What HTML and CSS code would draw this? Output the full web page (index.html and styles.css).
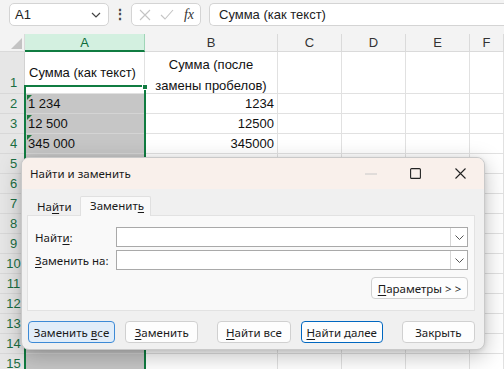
FILE: index.html
```html
<!DOCTYPE html>
<html lang="ru">
<head>
<meta charset="utf-8">
<link rel="stylesheet" href="styles.css">
</head>
<body>
<div class="app">
  <div class="fbar">
    <div class="namebox"><span>A1</span>
      <svg class="chev" width="10" height="6" viewBox="0 0 10 6"><path d="M1 1 L5 5 L9 1" fill="none" stroke="#444" stroke-width="1.2"/></svg>
    </div>
    <div class="dots">⋮</div>
    <div class="fxbox">
      <svg width="12" height="12" viewBox="0 0 12 12"><path d="M1 1 L11 11 M11 1 L1 11" stroke="#c4c4c4" stroke-width="1.1"/></svg>
      <svg width="14" height="12" viewBox="0 0 14 12"><path d="M1 6 L5 10 L13 1" fill="none" stroke="#c4c4c4" stroke-width="1.1"/></svg>
      <span class="fx"><i>f</i><i>x</i></span>
    </div>
    <div class="formula">Сумма (как текст)</div>
  </div>
  <div class="sheet">
    <div class="corner"><span class="tri"></span></div>
    <div class="ch sel">A</div>
    <div class="ch">B</div>
    <div class="ch">C</div>
    <div class="ch">D</div>
    <div class="ch">E</div>
    <div class="ch">F</div>

    <div class="rh r1">1</div>
    <div class="c cell-a1">Сумма (как текст)</div>
    <div class="c cell-b1">Сумма (после<br>замены пробелов)</div>
    <div class="c"></div><div class="c"></div><div class="c"></div><div class="c"></div>

    <div class="rh">2</div>
    <div class="c ga"><span class="flag"></span>1 234</div>
    <div class="c num">1234</div>
    <div class="c"></div><div class="c"></div><div class="c"></div><div class="c"></div>

    <div class="rh">3</div>
    <div class="c ga"><span class="flag"></span>12 500</div>
    <div class="c num">12500</div>
    <div class="c"></div><div class="c"></div><div class="c"></div><div class="c"></div>

    <div class="rh">4</div>
    <div class="c ga"><span class="flag"></span>345 000</div>
    <div class="c num">345000</div>
    <div class="c"></div><div class="c"></div><div class="c"></div><div class="c"></div>

    <div class="rh">5</div><div class="c ga"></div><div class="c"></div><div class="c"></div><div class="c"></div><div class="c"></div><div class="c"></div>
    <div class="rh">6</div><div class="c ga"></div><div class="c"></div><div class="c"></div><div class="c"></div><div class="c"></div><div class="c"></div>
    <div class="rh">7</div><div class="c ga"></div><div class="c"></div><div class="c"></div><div class="c"></div><div class="c"></div><div class="c"></div>
    <div class="rh">8</div><div class="c ga"></div><div class="c"></div><div class="c"></div><div class="c"></div><div class="c"></div><div class="c"></div>
    <div class="rh">9</div><div class="c ga"></div><div class="c"></div><div class="c"></div><div class="c"></div><div class="c"></div><div class="c"></div>
    <div class="rh">10</div><div class="c ga"></div><div class="c"></div><div class="c"></div><div class="c"></div><div class="c"></div><div class="c"></div>
    <div class="rh">11</div><div class="c ga"></div><div class="c"></div><div class="c"></div><div class="c"></div><div class="c"></div><div class="c"></div>
    <div class="rh">12</div><div class="c ga"></div><div class="c"></div><div class="c"></div><div class="c"></div><div class="c"></div><div class="c"></div>
    <div class="rh">13</div><div class="c ga"></div><div class="c"></div><div class="c"></div><div class="c"></div><div class="c"></div><div class="c"></div>
    <div class="rh">14</div><div class="c ga"></div><div class="c"></div><div class="c"></div><div class="c"></div><div class="c"></div><div class="c"></div>
    <div class="rh">15</div><div class="c ga"></div><div class="c"></div><div class="c"></div><div class="c"></div><div class="c"></div><div class="c"></div>

    <div class="selbox"><span class="handle"></span></div>
  </div>

  <div class="dialog">
    <div class="titlebar">
      <span class="title">Найти и заменить</span>
      <div class="wbtns">
        <svg width="12" height="2" viewBox="0 0 12 2"><path d="M0 1 H12" stroke="#c8c8c8" stroke-width="1"/></svg>
        <svg width="11" height="11" viewBox="0 0 11 11"><rect x="0.6" y="0.6" width="9.8" height="9.8" rx="1" fill="none" stroke="#222" stroke-width="1.1"/></svg>
        <svg width="11" height="11" viewBox="0 0 11 11"><path d="M0.5 0.5 L10.5 10.5 M10.5 0.5 L0.5 10.5" stroke="#222" stroke-width="1.1"/></svg>
      </div>
    </div>
    <div class="body">
      <div class="tabs">
        <div class="tab">На<u>й</u>ти</div>
        <div class="tab active">Заменит<u>ь</u></div>
      </div>
      <div class="panel">
        <div class="frow">
          <span class="lbl">Найт<u>и</u>:</span>
          <div class="inp"><span class="dd"><svg width="9" height="5" viewBox="0 0 9 5"><path d="M0.5 0.5 L4.5 4.5 L8.5 0.5" fill="none" stroke="#555" stroke-width="1"/></svg></span></div>
        </div>
        <div class="frow">
          <span class="lbl"><u>З</u>аменить на:</span>
          <div class="inp"><span class="dd"><svg width="9" height="5" viewBox="0 0 9 5"><path d="M0.5 0.5 L4.5 4.5 L8.5 0.5" fill="none" stroke="#555" stroke-width="1"/></svg></span></div>
        </div>
        <div class="prow"><button class="btn params"><u>П</u>араметры &gt; &gt;</button></div>
      </div>
      <div class="brow">
        <button class="btn bt-replall def">Заменить <u>в</u>се</button>
        <button class="btn bt-repl near"><u>З</u>аменить</button>
        <button class="btn bt-findall far"><u>Н</u>айти все</button>
        <button class="btn bt-next near focus"><u>Н</u>айти далее</button>
        <button class="btn bt-close far">Закрыть</button>
      </div>
    </div>
  </div>
</div>
</body>
</html>
```
FILE: styles.css
```css
* { box-sizing: border-box; }
html, body { margin: 0; padding: 0; }
body { width: 504px; height: 369px; overflow: hidden; background: #fff; font-family: "Liberation Sans", Arial, sans-serif; }
.app { position: relative; width: 504px; height: 369px; overflow: hidden; }

.fbar { height: 34px; background: #f3f3f3; display: flex; align-items: flex-start; padding: 3px 0 0 9px; }
.namebox { width: 100px; height: 23px; background: #fff; border: 1px solid #d4d4d4; border-radius: 5px; display: flex; align-items: center; justify-content: space-between; padding: 0 7px 0 5px; font-size: 13px; color: #222; }
.namebox .chev { margin-top: 1px; }
.dots { width: 22px; text-align: center; font-size: 14px; line-height: 23px; color: #444; font-weight: bold; }
.fxbox { width: 70px; height: 23px; background: #fff; border: 1px solid #d4d4d4; border-radius: 5px; display: flex; align-items: center; justify-content: space-between; padding: 0 6px 0 7px; }
.fx { font-family: "Liberation Serif", serif; font-size: 14px; color: #333; }
.fx i { font-style: italic; }
.formula { flex: 1; margin-left: 8px; height: 23px; background: #fff; border: 1px solid #d4d4d4; border-right: none; border-radius: 5px 0 0 5px; font-size: 13px; color: #222; line-height: 21px; padding-left: 9px; }

.sheet { position: relative; display: grid; grid-template-columns: 25px 120px 133px 64px 64px 64px 1fr; grid-template-rows: 18px 42px repeat(14, 20px); }
.corner { background: #f3f3f3; border-right: 1px solid #dadada; border-bottom: 1px solid #dadada; position: relative; }
.tri { position: absolute; right: 2px; bottom: 2px; width: 0; height: 0; border-left: 11px solid transparent; border-bottom: 11px solid #c3c3c3; }
.ch { background: #f3f3f3; border-right: 1px solid #dadada; border-bottom: 1px solid #dadada; font-size: 13px; color: #333; text-align: center; line-height: 17px; }
.ch.sel { background: #d3f0e0; color: #0e6b3a; border-bottom: 2px solid #107c41; border-right-color: #9fd5b7; }
.rh { background: #e6e6e6; border-right: 1px solid #d2d2d2; border-bottom: 1px solid #d8d8d8; color: #1a6e42; font-size: 13px; text-align: center; line-height: 19px; padding-left: 3px; }
.rh.r1 { display: flex; align-items: flex-end; justify-content: center; padding-bottom: 1px; }
.c { border-right: 1px solid #e1e1e1; border-bottom: 1px solid #e1e1e1; font-size: 13px; color: #111; line-height: 19px; padding: 0 3px; white-space: nowrap; position: relative; }
.c.cell-a1 { display: flex; align-items: center; padding-left: 4px; }
.c.cell-b1 { text-align: center; line-height: 21px; padding-top: 2px; }
.c.num { text-align: right; }
.c.ga { background: #c6c6c6; border-bottom-color: #d4d4d4; }
.flag { position: absolute; left: 2px; top: 1px; width: 0; height: 0; border-top: 5px solid #1d7a3e; border-right: 5px solid transparent; }

.selbox { position: absolute; left: 24px; top: 51px; width: 122px; height: 330px; border: 2px solid #107c41; pointer-events: none; }
.handle { position: absolute; right: -4px; top: -3px; width: 6px; height: 6px; background: #107c41; border: 1px solid #fff; }

.dialog { position: absolute; left: 21px; top: 157px; width: 464px; height: 193px; background: #f0f0f0; border: 1px solid #c9c9c9; border-radius: 8px; overflow: hidden; box-shadow: 0 6px 22px rgba(0,0,0,0.25), 0 1px 4px rgba(0,0,0,0.1); font-family: "Noto Sans", "Open Sans", sans-serif; font-size: 11.5px; color: #1a1a1a; }
.titlebar { height: 31px; background: #f9f0eb; display: flex; align-items: center; justify-content: space-between; padding-left: 8px; }
.title { font-size: 11.5px; color: #1a1a1a; }
.wbtns { display: flex; align-items: center; }
.wbtns svg { display: block; }
.wbtns svg:nth-child(1) { margin-right: 33px; }
.wbtns svg:nth-child(2) { margin-right: 34px; }
.wbtns svg:nth-child(3) { margin-right: 18px; }
.body { padding: 7px 9px 0 5px; }
.tabs { display: flex; height: 19px; padding-left: 1px; position: relative; z-index: 1; }
.tab { padding: 0 8px; line-height: 22px; height: 20px; }
.tab:first-child { width: 52px; padding-left: 9px; }
.tab.active { width: 71px; background: #f9f9f9; border: 1px solid #e0e0e0; border-bottom: none; border-radius: 2px 2px 0 0; line-height: 18px; padding-left: 9px; height: 20px; }
.panel { height: 96px; background: #f9f9f9; border: 1px solid #e2e2e2; padding: 11px 6px 0 7px; }
.frow { display: flex; align-items: center; height: 20px; margin-bottom: 3px; }
.lbl { width: 81px; }
.inp { flex: 1; height: 20px; background: #fff; border: 1px solid #a9a9a9; display: flex; justify-content: flex-end; }
.dd { width: 17px; height: 18px; border-left: 1px solid #d6d6d6; display: flex; align-items: center; justify-content: center; }
.prow { display: flex; justify-content: flex-end; margin-top: 7px; }
.btn { font-family: "Noto Sans", "Open Sans", sans-serif; font-size: 11.5px; color: #1a1a1a; background: #fdfdfd; border: 1px solid #d0d0d0; border-radius: 4px; height: 22px; padding: 0; margin: 0; line-height: 19px; }
.params { width: 97px; }
.brow { display: flex; margin-top: 10px; padding-left: 1px; }
.bt-replall { width: 88px; }
.bt-repl { width: 74px; }
.bt-findall { width: 74px; }
.bt-next { width: 83px; }
.bt-close { width: 74px; }
.near { margin-left: 10px; }
.far { margin-left: 19px; }
.def { background: #e1edf9; border-color: #3d8ad6; }
.focus { border: 1.5px solid #0067c0; }
u { text-decoration: underline; text-underline-offset: 2px; }
```
